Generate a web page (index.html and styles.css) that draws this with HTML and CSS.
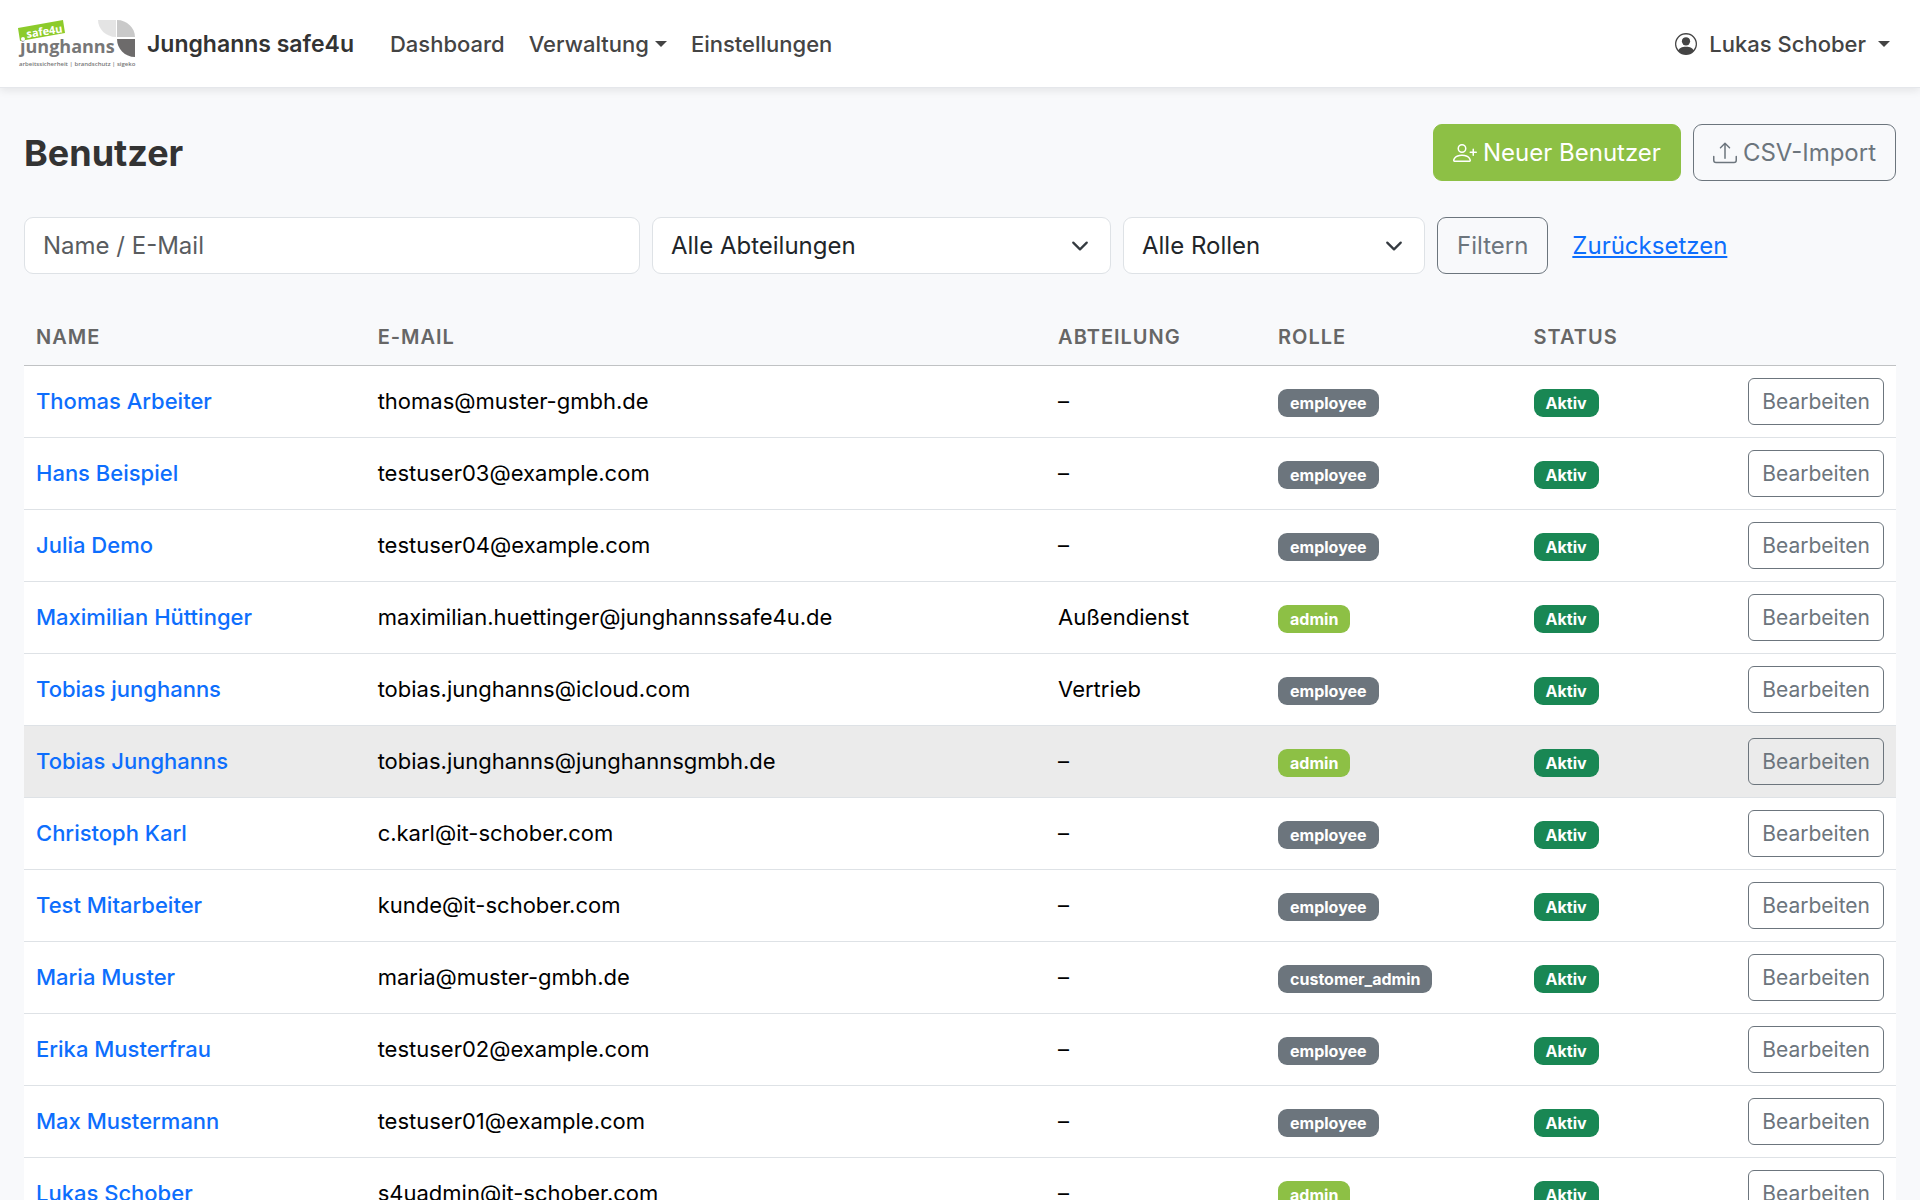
FILE: index.html
```html
<!DOCTYPE html>
<html lang="de">
<head>
  <meta charset="UTF-8">
  <meta name="viewport" content="width=device-width, initial-scale=1">
  <title>Benutzer – Junghanns safe4u</title>
  <link rel="stylesheet" href="styles.css">
</head>
<body>

  <nav class="navbar">
    <a class="brand" href="#">
      <svg class="logo" viewBox="0 0 118 54" aria-hidden="true">
        <path fill="#e4e4e4" d="M80 3h18v17C88 20 80 12 80 3z"/>
        <path fill="#c9c9c9" d="M99 3c10 0 18 8 18 17H99z"/>
        <path fill="#6d6b6b" d="M99 22h18v18c-10 0-18-8-18-18z"/>
        <path fill="#8ccb2b" d="M0 11 45 3l2 13L2 24z"/>
        <text class="logo-tag" transform="translate(9 21) rotate(-9)">safe4u</text>
        <text class="logo-name" x="2" y="36">junghanns</text>
        <circle fill="#fff" cx="5" cy="22" r="2"/>
        <text class="logo-claim" x="1" y="49">arbeitssicherheit | brandschutz | sigeko</text>
      </svg>
      <span>Junghanns safe4u</span>
    </a>
    <ul class="nav">
      <li><a class="nav-link" href="#">Dashboard</a></li>
      <li><a class="nav-link dropdown" href="#">Verwaltung</a></li>
      <li><a class="nav-link" href="#">Einstellungen</a></li>
    </ul>
    <a class="nav-link dropdown user-menu" href="#">
      <svg class="icon" viewBox="0 0 16 16"><path d="M11 6a3 3 0 1 1-6 0 3 3 0 0 1 6 0"/><path fill-rule="evenodd" d="M0 8a8 8 0 1 1 16 0A8 8 0 0 1 0 8m8-7a7 7 0 0 0-5.468 11.37C3.242 11.226 4.805 10 8 10s4.757 1.225 5.468 2.37A7 7 0 0 0 8 1"/></svg>
      <span>Lukas Schober</span>
    </a>
  </nav>

  <main class="content">
    <div class="page-head">
      <h1>Benutzer</h1>
      <div class="actions">
        <a class="btn btn-primary" href="#">
          <svg class="icon" viewBox="0 0 16 16"><path d="M6 8a3 3 0 1 0 0-6 3 3 0 0 0 0 6m2-3a2 2 0 1 1-4 0 2 2 0 0 1 4 0m4 8c0 1-1 1-1 1H1s-1 0-1-1 1-4 6-4 6 3 6 4m-1-.004c-.001-.246-.154-.986-.832-1.664C9.516 10.68 8.289 10 6 10s-3.516.68-4.168 1.332c-.678.678-.83 1.418-.832 1.664z"/><path fill-rule="evenodd" d="M13.5 5a.5.5 0 0 1 .5.5V7h1.5a.5.5 0 0 1 0 1H14v1.5a.5.5 0 0 1-1 0V8h-1.5a.5.5 0 0 1 0-1H13V5.5a.5.5 0 0 1 .5-.5"/></svg>
          Neuer Benutzer
        </a>
        <a class="btn btn-outline" href="#">
          <svg class="icon" viewBox="0 0 16 16"><path d="M.5 9.9a.5.5 0 0 1 .5.5v2.5a1 1 0 0 0 1 1h12a1 1 0 0 0 1-1v-2.5a.5.5 0 0 1 1 0v2.5a2 2 0 0 1-2 2H2a2 2 0 0 1-2-2v-2.5a.5.5 0 0 1 .5-.5"/><path d="M7.646 1.146a.5.5 0 0 1 .708 0l3 3a.5.5 0 0 1-.708.708L8.5 2.707V11.5a.5.5 0 0 1-1 0V2.707L5.354 4.854a.5.5 0 1 1-.708-.708z"/></svg>
          CSV-Import
        </a>
      </div>
    </div>

    <form class="filters">
      <input class="form-control col-4" type="text" name="q" placeholder="Name / E-Mail" aria-label="Name / E-Mail">
      <select class="form-control form-select col-3" name="department" aria-label="Abteilung">
        <option>Alle Abteilungen</option>
        <option>Außendienst</option>
        <option>Vertrieb</option>
      </select>
      <select class="form-control form-select col-2" name="role" aria-label="Rolle">
        <option>Alle Rollen</option>
        <option>admin</option>
        <option>customer_admin</option>
        <option>employee</option>
      </select>
      <div class="filter-actions col-3">
        <button class="btn btn-outline" type="submit">Filtern</button>
        <a class="reset-link" href="#">Zurücksetzen</a>
      </div>
    </form>

    <table class="table">
      <colgroup>
        <col class="c-name">
        <col class="c-mail">
        <col class="c-dept">
        <col class="c-role">
        <col class="c-status">
        <col class="c-action">
      </colgroup>
      <thead>
        <tr>
          <th>Name</th>
          <th>E-Mail</th>
          <th>Abteilung</th>
          <th>Rolle</th>
          <th>Status</th>
          <th></th>
        </tr>
      </thead>
      <tbody>
        <tr>
          <td><a class="user-link" href="#">Thomas Arbeiter</a></td>
          <td>thomas@muster-gmbh.de</td>
          <td>–</td>
          <td><span class="badge">employee</span></td>
          <td><span class="badge badge-active">Aktiv</span></td>
          <td class="action"><a class="btn btn-outline btn-sm" href="#">Bearbeiten</a></td>
        </tr>
        <tr>
          <td><a class="user-link" href="#">Hans Beispiel</a></td>
          <td>testuser03@example.com</td>
          <td>–</td>
          <td><span class="badge">employee</span></td>
          <td><span class="badge badge-active">Aktiv</span></td>
          <td class="action"><a class="btn btn-outline btn-sm" href="#">Bearbeiten</a></td>
        </tr>
        <tr>
          <td><a class="user-link" href="#">Julia Demo</a></td>
          <td>testuser04@example.com</td>
          <td>–</td>
          <td><span class="badge">employee</span></td>
          <td><span class="badge badge-active">Aktiv</span></td>
          <td class="action"><a class="btn btn-outline btn-sm" href="#">Bearbeiten</a></td>
        </tr>
        <tr>
          <td><a class="user-link" href="#">Maximilian Hüttinger</a></td>
          <td>maximilian.huettinger@junghannssafe4u.de</td>
          <td>Außendienst</td>
          <td><span class="badge badge-admin">admin</span></td>
          <td><span class="badge badge-active">Aktiv</span></td>
          <td class="action"><a class="btn btn-outline btn-sm" href="#">Bearbeiten</a></td>
        </tr>
        <tr>
          <td><a class="user-link" href="#">Tobias junghanns</a></td>
          <td>tobias.junghanns@icloud.com</td>
          <td>Vertrieb</td>
          <td><span class="badge">employee</span></td>
          <td><span class="badge badge-active">Aktiv</span></td>
          <td class="action"><a class="btn btn-outline btn-sm" href="#">Bearbeiten</a></td>
        </tr>
        <tr class="active">
          <td><a class="user-link" href="#">Tobias Junghanns</a></td>
          <td>tobias.junghanns@junghannsgmbh.de</td>
          <td>–</td>
          <td><span class="badge badge-admin">admin</span></td>
          <td><span class="badge badge-active">Aktiv</span></td>
          <td class="action"><a class="btn btn-outline btn-sm" href="#">Bearbeiten</a></td>
        </tr>
        <tr>
          <td><a class="user-link" href="#">Christoph Karl</a></td>
          <td>c.karl@it-schober.com</td>
          <td>–</td>
          <td><span class="badge">employee</span></td>
          <td><span class="badge badge-active">Aktiv</span></td>
          <td class="action"><a class="btn btn-outline btn-sm" href="#">Bearbeiten</a></td>
        </tr>
        <tr>
          <td><a class="user-link" href="#">Test Mitarbeiter</a></td>
          <td>kunde@it-schober.com</td>
          <td>–</td>
          <td><span class="badge">employee</span></td>
          <td><span class="badge badge-active">Aktiv</span></td>
          <td class="action"><a class="btn btn-outline btn-sm" href="#">Bearbeiten</a></td>
        </tr>
        <tr>
          <td><a class="user-link" href="#">Maria Muster</a></td>
          <td>maria@muster-gmbh.de</td>
          <td>–</td>
          <td><span class="badge">customer_admin</span></td>
          <td><span class="badge badge-active">Aktiv</span></td>
          <td class="action"><a class="btn btn-outline btn-sm" href="#">Bearbeiten</a></td>
        </tr>
        <tr>
          <td><a class="user-link" href="#">Erika Musterfrau</a></td>
          <td>testuser02@example.com</td>
          <td>–</td>
          <td><span class="badge">employee</span></td>
          <td><span class="badge badge-active">Aktiv</span></td>
          <td class="action"><a class="btn btn-outline btn-sm" href="#">Bearbeiten</a></td>
        </tr>
        <tr>
          <td><a class="user-link" href="#">Max Mustermann</a></td>
          <td>testuser01@example.com</td>
          <td>–</td>
          <td><span class="badge">employee</span></td>
          <td><span class="badge badge-active">Aktiv</span></td>
          <td class="action"><a class="btn btn-outline btn-sm" href="#">Bearbeiten</a></td>
        </tr>
        <tr>
          <td><a class="user-link" href="#">Lukas Schober</a></td>
          <td>s4uadmin@it-schober.com</td>
          <td>–</td>
          <td><span class="badge badge-admin">admin</span></td>
          <td><span class="badge badge-active">Aktiv</span></td>
          <td class="action"><a class="btn btn-outline btn-sm" href="#">Bearbeiten</a></td>
        </tr>
      </tbody>
    </table>
  </main>

</body>
</html>
```
FILE: styles.css
```css
* {
  box-sizing: border-box;
}
body {
  margin: 0;
  font-family: Inter, sans-serif;
  font-size: 24px;
  line-height: 36px;
  color: #333;
  background: #f8f9fb;
}
.icon {
  width: 24px;
  height: 24px;
  fill: currentColor;
}

/* Navigation */
.navbar {
  display: flex;
  align-items: center;
  padding: 12px 30px 12px 18px;
  min-height: 88px;
  background: #fff;
  border-bottom: 1px solid #e5e7eb;
  box-shadow: 0 3px 8px rgba(0, 0, 0, 0.08);
}
.brand {
  display: flex;
  align-items: center;
  gap: 11px;
  margin-right: 24px;
  font-size: 23px;
  font-weight: 600;
  color: #333;
  text-decoration: none;
}
.logo {
  width: 118px;
  height: 54px;
}
.logo-tag {
  font: 700 11px "Open Sans", sans-serif;
  fill: #fff;
}
.logo-name {
  font: 700 18px "Open Sans", sans-serif;
  fill: #777;
}
.logo-claim {
  font: 600 6px "Open Sans", sans-serif;
  fill: #777;
}
.nav {
  display: flex;
  list-style: none;
  margin: 0;
  padding: 0;
}
.nav-link {
  display: flex;
  align-items: center;
  padding: 12px;
  font-size: 22px;
  font-weight: 500;
  color: #444;
  text-decoration: none;
}
.dropdown::after {
  content: "";
  margin-left: 6px;
  border-top: 6px solid;
  border-left: 6px solid transparent;
  border-right: 6px solid transparent;
}
.user-menu {
  margin-left: auto;
  padding-right: 0;
  gap: 12px;
}
.user-menu .icon {
  width: 22px;
  height: 22px;
}
.user-menu::after {
  margin-left: 0;
}

/* Page head */
.content {
  padding: 36px 24px;
}
.page-head {
  display: flex;
  justify-content: space-between;
  align-items: center;
  margin-bottom: 36px;
}
h1 {
  margin: 0;
  font-size: 36px;
  font-weight: 700;
}
.actions {
  display: flex;
  gap: 12px;
}
.btn {
  display: inline-flex;
  align-items: center;
  gap: 6px;
  padding: 9px 19px;
  border: 1px solid transparent;
  border-radius: 9px;
  font: inherit;
  line-height: 37px;
  text-decoration: none;
  cursor: pointer;
}
.btn-primary {
  color: #fff;
  background: #8dc045;
  border-color: #8dc045;
}
.btn-outline {
  color: #6c757d;
  background: transparent;
  border-color: #6c757d;
}
.btn-sm {
  padding: 6px 13px;
  border-radius: 6px;
  font-size: 21px;
  line-height: 33px;
}

/* Filters */
.filters {
  display: grid;
  grid-template-columns: repeat(12, 1fr);
  gap: 12px;
  margin-bottom: 36px;
}
.col-2 { grid-column: span 2; }
.col-3 { grid-column: span 3; }
.col-4 { grid-column: span 4; }
.form-control {
  width: 100%;
  padding: 9px 18px;
  border: 1px solid #dee2e6;
  border-radius: 9px;
  font: inherit;
  line-height: 36px;
  color: #212529;
  background: #fff;
}
.form-control::placeholder {
  color: #595c5f;
}
.form-select {
  appearance: none;
  background: #fff url("data:image/svg+xml,%3csvg xmlns='http://www.w3.org/2000/svg' viewBox='0 0 16 16'%3e%3cpath fill='none' stroke='%23343a40' stroke-linecap='round' stroke-linejoin='round' stroke-width='2' d='m2 5 6 6 6-6'/%3e%3c/svg%3e") no-repeat right 18px center / 24px 18px;
}
.filter-actions {
  display: flex;
  align-items: center;
  gap: 24px;
}
.reset-link {
  color: #0d6efd;
}

/* Table */
.table {
  width: 100%;
  table-layout: fixed;
  border-collapse: separate;
  border-spacing: 0;
  font-size: 22px;
  color: #000;
}
.c-name { width: 18.25%; }
.c-mail { width: 36.35%; }
.c-dept { width: 11.75%; }
.c-role { width: 13.65%; }
.c-status { width: 8%; }
.c-action { width: 12%; }
th {
  padding: 12px;
  border-bottom: 1px solid #c0c2c4;
  font-size: 20px;
  font-weight: 600;
  line-height: 31px;
  letter-spacing: 1px;
  text-align: left;
  text-transform: uppercase;
  color: #666;
}
td {
  padding: 12px;
  border-bottom: 1px solid #dee2e6;
  line-height: 33px;
  background: #fff;
}
.active td {
  background: #ebebeb;
}
.action {
  text-align: right;
}
.action .btn {
  vertical-align: top;
}
.user-link {
  font-weight: 500;
  color: #0d6efd;
  text-decoration: none;
}
.badge {
  display: inline-block;
  padding: 6px 12px;
  border-radius: 9px;
  font-size: 16px;
  font-weight: 700;
  line-height: 16px;
  color: #fff;
  background: #6c757d;
}
.badge-admin {
  background: #8dc045;
}
.badge-active {
  background: #198754;
}
```
